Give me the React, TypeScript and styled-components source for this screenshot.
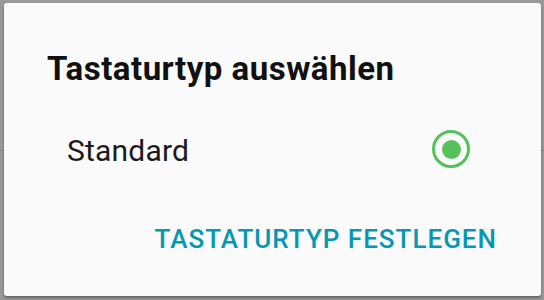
import React, { useState } from 'react';
import styled, { createGlobalStyle } from 'styled-components';

const GlobalStyle = createGlobalStyle`
  html, body {
    margin: 0;
    padding: 0;
    background: #999999;
    font-family: Roboto, "Noto Sans", "Liberation Sans", sans-serif;
  }
`;

const options = ['Standard'];

export default function App() {
  const [selected, setSelected] = useState('Standard');

  return (
    <>
      <GlobalStyle />
      <StyledScreen>
        <StyledBehindRule />

        <StyledDialog>
          <StyledTitle>Tastaturtyp auswählen</StyledTitle>
          {options.map((option) => (
            <StyledOption key={option} onClick={() => setSelected(option)}>
              <StyledOptionLabel>{option}</StyledOptionLabel>
              <StyledRadio checked={selected === option} />
            </StyledOption>
          ))}
          <StyledActions>
            <StyledTextButton>TASTATURTYP FESTLEGEN</StyledTextButton>
          </StyledActions>
        </StyledDialog>
      </StyledScreen>
    </>
  );
}

const StyledScreen = styled.div`
  position: relative;
  width: 544px;
  height: 300px;
  overflow: hidden;
  background: #999999;
`;

const StyledBehindRule = styled.div`
  position: absolute;
  left: 0;
  right: 0;
  top: 150px;
  height: 1px;
  background: #8a8a8a;
`;

const StyledDialog = styled.div`
  position: absolute;
  left: 4px;
  top: 3px;
  width: 537px;
  height: 293px;
  box-sizing: border-box;
  display: flex;
  flex-direction: column;
  padding: 48px 44px 0 43px;
  background: #fafafa;
  border-radius: 3px;
  box-shadow: 0 2px 3px rgba(0, 0, 0, 0.35);
`;

const StyledTitle = styled.h2`
  margin: 0;
  font-size: 33px;
  line-height: 36px;
  font-weight: 700;
  letter-spacing: 0.5px;
  color: #111111;
`;

const StyledOption = styled.div`
  display: flex;
  align-items: center;
  justify-content: space-between;
  height: 40px;
  margin: 42px 27px 0 20px;
  cursor: pointer;
`;

const StyledOptionLabel = styled.span`
  padding-top: 4px;
  font-size: 30px;
  line-height: 36px;
  letter-spacing: 0.2px;
  color: #1a1a1a;
`;

const StyledRadio = styled.span<{ checked: boolean }>`
  width: 38px;
  height: 38px;
  box-sizing: border-box;
  display: flex;
  align-items: center;
  justify-content: center;
  border: 3px solid #55c15a;
  border-radius: 50%;

  &::after {
    content: '';
    width: 19px;
    height: 19px;
    border-radius: 50%;
    background: ${({ checked }) => (checked ? '#55c15a' : 'transparent')};
  }
`;

const StyledActions = styled.div`
  display: flex;
  justify-content: flex-end;
  margin-top: 54px;
`;

const StyledTextButton = styled.button`
  padding: 0;
  background: none;
  border: none;
  font-family: inherit;
  font-size: 26px;
  line-height: 32px;
  font-weight: 500;
  letter-spacing: 1px;
  color: #0697b3;
  cursor: pointer;
`;
